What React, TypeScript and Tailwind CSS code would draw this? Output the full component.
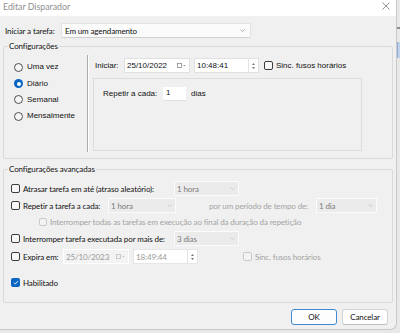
import React from "react";

const seg = "font-['Lato',sans-serif] text-[8px] tracking-[-0.12px] leading-[10px] whitespace-nowrap";
const ms = "font-['Liberation_Sans',sans-serif] text-[8px] leading-[10px] whitespace-nowrap";

function Chevron({ color = "#9a9a9a" }: { color?: string }) {
  return (
    <svg width="5" height="3" viewBox="0 0 5 3">
      <path d="M0.5 0.5 L2.5 2.5 L4.5 0.5" fill="none" stroke={color} strokeWidth="0.8" />
    </svg>
  );
}

function Check({ checked = false, disabled = false, size = 9 }: { checked?: boolean; disabled?: boolean; size?: number }) {
  if (checked) {
    return (
      <div className="shrink-0 rounded-[2px] bg-[#0a64c2] flex items-center justify-center" style={{ width: size, height: size }}>
        <svg width="6" height="5" viewBox="0 0 6 5">
          <path d="M0.8 2.6 L2.3 4 L5.2 0.9" fill="none" stroke="#fff" strokeWidth="0.9" />
        </svg>
      </div>
    );
  }
  return (
    <div
      className={`shrink-0 rounded-[2px] border ${disabled ? "border-[#c9c9c9] bg-[#f3f3f3]" : "border-[#3c3c3c] bg-[#f7f7f7]"}`}
      style={{ width: size, height: size }}
    />
  );
}

function Radio({ checked = false }: { checked?: boolean }) {
  if (checked) {
    return (
      <div className="w-[9px] h-[9px] shrink-0 rounded-full bg-[#0a64c2] flex items-center justify-center">
        <div className="w-[4px] h-[4px] rounded-full bg-white" />
      </div>
    );
  }
  return <div className="w-[9px] h-[9px] shrink-0 rounded-full border border-[#505050] bg-[#f5f5f5]" />;
}

function DisSelect({ text, w }: { text: string; w: string }) {
  return (
    <div className={`${w} h-[15px] shrink-0 bg-[#ebebeb] border border-[#fbfbfb] flex items-center justify-between pl-[2px] pr-[3px]`}>
      <span className={`${seg} text-[#7a7a7a]`}>{text}</span>
      <Chevron color="#c4c4c4" />
    </div>
  );
}

function CalIcon({ color }: { color: string }) {
  return (
    <svg width="9" height="5" viewBox="0 0 9 5">
      <rect x="0.5" y="0.5" width="4" height="4" fill="none" stroke={color} strokeWidth="0.8" />
      <path d="M6 2 L7.3 3.3 L8.6 2" fill={color} />
    </svg>
  );
}

function Spinner() {
  return (
    <div className="w-[9px] h-full border-l border-[#e3e3e3] flex flex-col items-center justify-center gap-[2px]">
      <svg width="3" height="2" viewBox="0 0 3 2"><path d="M0 2 L1.5 0 L3 2Z" fill="#777" /></svg>
      <svg width="3" height="2" viewBox="0 0 3 2"><path d="M0 0 L1.5 2 L3 0Z" fill="#777" /></svg>
    </div>
  );
}

export default function App() {
  return (
    <div className="w-[400px] h-[333px] bg-[#e8e8e8] relative overflow-hidden">
      <div className="absolute right-0 top-[27px] w-[3px] h-[2px] bg-[#8c8c8c]" />
      <div className="absolute right-0 top-[42px] w-[3px] h-[16px] bg-[#bfd2e9] border-l border-[#8fb0d8]" />
      <div className="w-[397px] h-[330px] bg-[#f0f0f0] border-r border-b border-[#c9c9c9] rounded-br-[7px] flex flex-col">
        {/* title bar */}
        <div className="h-[16px] bg-white flex items-center justify-between pl-[3px] pr-[6px] shrink-0">
          <span className="font-['Lato',sans-serif] text-[8.8px] leading-[10px] whitespace-nowrap text-[#8f8f8f] -mt-[2px]">Editar Disparador</span>
          <svg width="8" height="8" viewBox="0 0 8 8" className="-mt-[4px]">
            <path d="M0.5 0.5 L7.5 7.5 M7.5 0.5 L0.5 7.5" stroke="#777" strokeWidth="0.8" />
          </svg>
        </div>

        {/* start task row */}
        <div className="mt-[7px] h-[15px] flex items-center pl-[5px]">
          <span className={`${seg} text-[#111] w-[56px] shrink-0`}>Iniciar a tarefa:</span>
          <div className="w-[190px] h-[15px] bg-[#fbfbfb] border border-[#e2e2e2] border-b-[#d0d0d0] rounded-[2px] flex items-center justify-between pl-[3px] pr-[5px]">
            <span className={`${seg} text-[#111]`}>Em um agendamento</span>
            <Chevron />
          </div>
        </div>

        {/* Configurações */}
        <fieldset className="mt-[3px] ml-[3px] w-[390px] h-[118px] border border-[#dadada] rounded-[2px] px-0 pb-0 shrink-0">
          <legend className={`${seg} text-[#111] ml-[4px] px-[1px]`}>Configurações</legend>
          <div className="flex pt-[4px] h-[108px]">
            <div className="w-[83px] pl-[10px] pt-[4px] flex flex-col">
              {[
                ["Uma vez", false],
                ["Diário", true],
                ["Semanal", false],
                ["Mensalmente", false],
              ].map(([t, c]) => (
                <div key={t as string} className="h-[16.4px] flex items-center gap-[4px]">
                  <Radio checked={c as boolean} />
                  <span className={`${ms} text-[#111]`}>{t as string}</span>
                </div>
              ))}
            </div>
            <div className="w-[2px] h-[97px] border-l border-[#a9a9a9] border-r border-r-white shrink-0" />
            <div className="ml-[4px] flex flex-col">
              <div className="mt-[3px] h-[15px] flex items-center pl-[2px]">
                <span className={`${ms} text-[#111] w-[29px] shrink-0`}>Iniciar:</span>
                <div className="w-[66px] h-[15px] bg-white border border-[#e0e0e0] flex items-center justify-between pl-[2px] pr-[3px]">
                  <span className={`${ms} text-[#111]`}>25/10/2022</span>
                  <CalIcon color="#8a8a8a" />
                </div>
                <div className="ml-[4px] w-[65px] h-[15px] bg-white border border-[#e0e0e0] flex items-center justify-between pl-[2px] pr-[1px]">
                  <span className={`${ms} text-[#111]`}>10:48:41</span>
                  <Spinner />
                </div>
                <div className="ml-[5px]"><Check /></div>
                <span className={`${ms} text-[#111] ml-[3px]`}>Sinc. fusos horários</span>
              </div>
              <div className="mt-[5px] w-[269px] h-[73px] border border-[#dcdcdc] pl-[9px] pt-[8px]">
                <div className="flex items-center h-[14px]">
                  <span className={`${ms} text-[#111] w-[60px] shrink-0`}>Repetir a cada:</span>
                  <div className="w-[23px] h-[14px] shrink-0 bg-white border-b border-[#e0e0e0] pl-[3px] pt-[1px] flex items-start">
                    <span className={`${ms} text-[#111]`}>1</span>
                  </div>
                  <span className={`${ms} text-[#111] ml-[5px]`}>dias</span>
                </div>
              </div>
            </div>
          </div>
        </fieldset>

        {/* Configurações avançadas */}
        <fieldset className="mt-[5px] ml-[3px] w-[390px] h-[139px] border border-[#dadada] rounded-[2px] px-0 pb-0 shrink-0">
          <legend className={`${seg} text-[#111] ml-[4px] px-[1px]`}>Configurações avançadas</legend>
          <div className="pl-[7px] pt-[7px] flex flex-col">
            <div className="h-[15px] flex items-center">
              <Check />
              <span className={`${seg} text-[#111] ml-[3px] w-[151px] shrink-0`}>Atrasar tarefa em até (atraso aleatório):</span>
              <DisSelect text="1 hora" w="w-[65px]" />
            </div>
            <div className="mt-[2px] h-[15px] flex items-center">
              <Check />
              <span className={`${seg} text-[#111] ml-[3px] w-[85px] shrink-0`}>Repetir a tarefa a cada:</span>
              <DisSelect text="1 hora" w="w-[68px]" />
              <span className={`${seg} text-[#a3a3a3] ml-[33px] w-[107px] shrink-0`}>por um período de tempo de:</span>
              <DisSelect text="1 dia" w="w-[61px]" />
            </div>
            <div className="mt-[2px] h-[13px] flex items-center pl-[28px]">
              <Check disabled size={8} />
              <span className={`${seg} text-[#a3a3a3] ml-[3px]`}>Interromper todas as tarefas em execução ao final da duração da repetição</span>
            </div>
            <div className="mt-[3px] h-[15px] flex items-center">
              <Check />
              <span className={`${seg} text-[#111] ml-[3px] w-[151px] shrink-0`}>Interromper tarefa executada por mais de:</span>
              <DisSelect text="3 dias" w="w-[65px]" />
            </div>
            <div className="mt-[3px] h-[15px] flex items-center">
              <Check />
              <span className={`${seg} text-[#111] ml-[3px] w-[40px] shrink-0`}>Expira em:</span>
              <div className="w-[66px] h-[15px] shrink-0 bg-[#f3f3f3] border border-[#ffffff] flex items-center justify-between pl-[2px] pr-[3px]">
                <span className={`${seg} text-[#9a9a9a]`}>25/10/2023</span>
                <CalIcon color="#c0c0c0" />
              </div>
              <div className="ml-[4px] w-[65px] h-[15px] shrink-0 bg-white border border-[#e6e6e6] flex items-center justify-between pl-[2px] pr-[1px]">
                <span className={`${seg} text-[#9a9a9a]`}>18:49:44</span>
                <Spinner />
              </div>
              <div className="ml-[45px]"><Check disabled /></div>
              <span className={`${seg} text-[#a3a3a3] ml-[3px]`}>Sinc. fusos horários</span>
            </div>
            <div className="mt-[11px] h-[15px] flex items-center">
              <Check checked />
              <span className={`${seg} text-[#111] ml-[3px]`}>Habilitado</span>
            </div>
          </div>
        </fieldset>

        {/* buttons */}
        <div className="mt-[6px] flex justify-end gap-[5px] pr-[8px]">
          <button className={`${seg} w-[46px] h-[16px] bg-[#fdfdfd] border border-[#3f8ad6] rounded-[3px] text-[#111]`}>OK</button>
          <button className={`${seg} w-[46px] h-[16px] bg-[#fdfdfd] border border-[#d3d3d3] border-b-[#bdbdbd] rounded-[3px] text-[#111]`}>Cancelar</button>
        </div>
      </div>
    </div>
  );
}
